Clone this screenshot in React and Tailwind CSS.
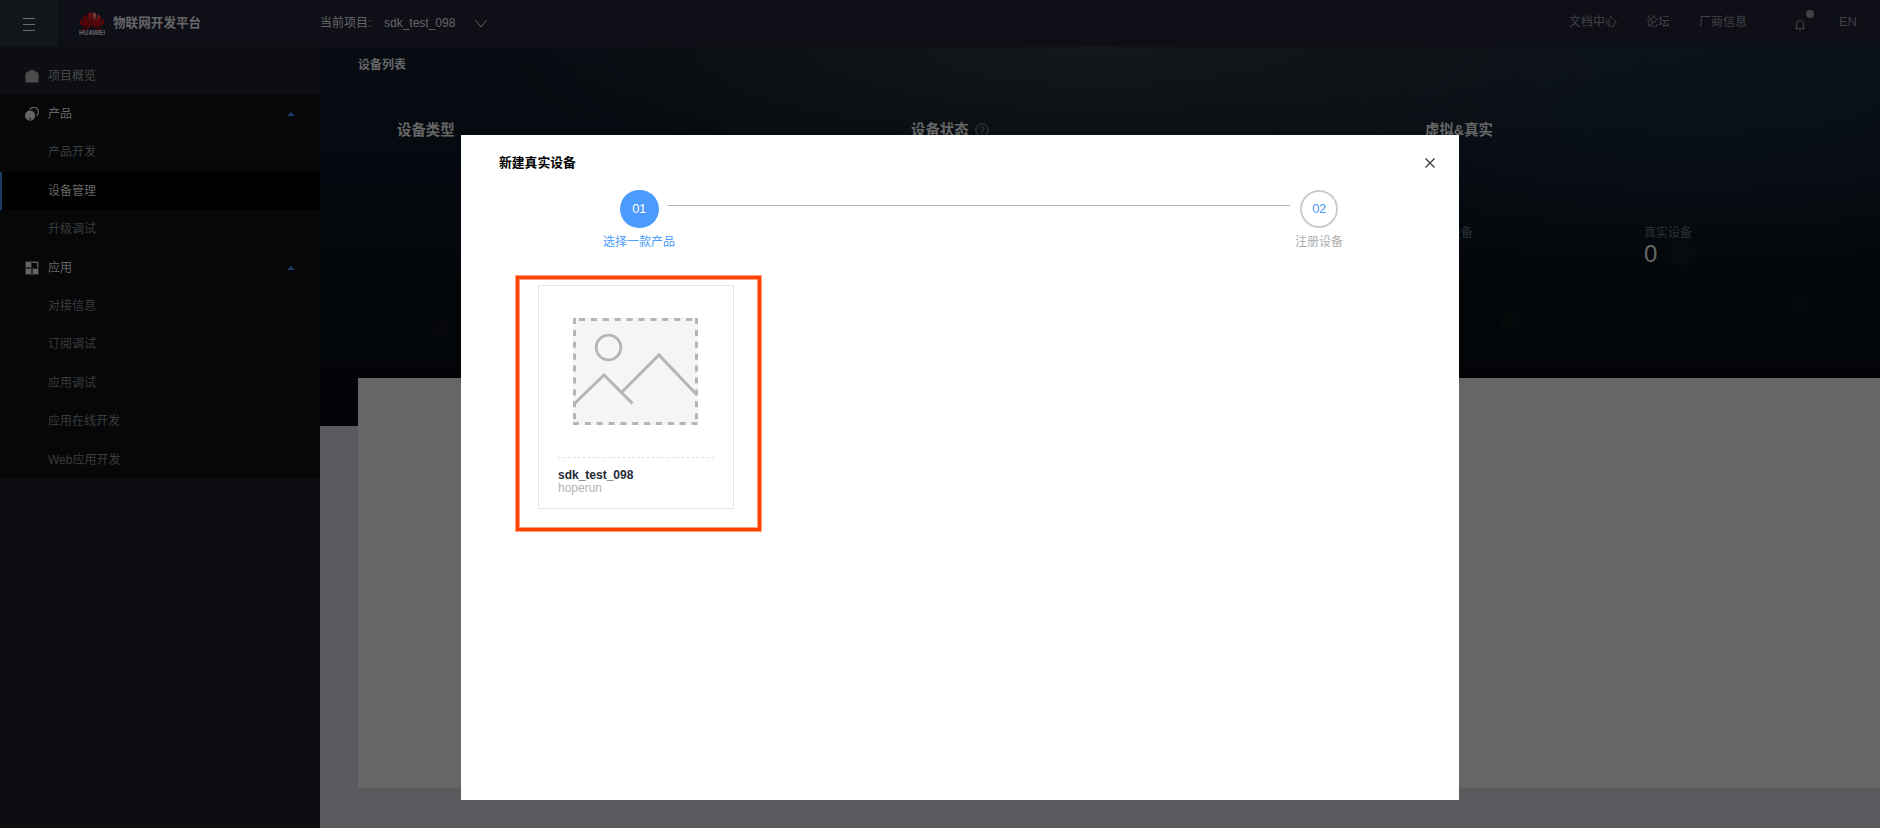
const rows = [
  { t: '产品', icon: 'product', head: true },
  { t: '产品开发' },
  { t: '设备管理', active: true },
  { t: '升级调试' },
  { t: '应用', icon: 'app', head: true },
  { t: '对接信息' },
  { t: '订阅调试' },
  { t: '应用调试' },
  { t: '应用在线开发' },
  { t: 'Web应用开发', last: true },
];

function Icon({ name }) {
  if (name === 'home')
    return (
      <svg width="14" height="14" viewBox="0 0 14 14"><path d="M7 0.5 L13.5 4 V13.5 H0.5 V4 Z" fill="#4a4b4d" /></svg>
    );
  if (name === 'product')
    return (
      <svg width="14" height="14" viewBox="0 0 14 14">
        <path d="M4.6 2.8 A4.7 4.7 0 1 1 11.5 8.8" fill="none" stroke="#5b5c5c" strokeWidth="1.3" />
        <circle cx="5.1" cy="8.6" r="5.1" fill="#646565" />
        <circle cx="5.3" cy="11.8" r="0.9" fill="#060708" />
      </svg>
    );
  return (
    <svg width="14" height="14" viewBox="0 0 14 14">
      <rect width="14" height="14" fill="#2a2b2c" />
      <rect x="1" y="1" width="5" height="5" fill="#646565" />
      <rect x="1" y="8" width="5" height="5" fill="#646565" />
      <rect x="8" y="8" width="5" height="5" fill="#646565" />
      <rect x="7" y="2" width="5" height="5" fill="#060708" />
      <path d="M7.5 1.5 H12.5 V6" fill="none" stroke="#646565" />
    </svg>
  );
}

function Petals() {
  return (
    <svg width="26" height="18" viewBox="0 0 26 18" className="mx-auto block">
      <defs>
        <radialGradient id="petal" gradientUnits="userSpaceOnUse" cx="16" cy="3" r="10">
          <stop offset="0" stopColor="#7d4740" />
          <stop offset="0.55" stopColor="#62090d" />
          <stop offset="1" stopColor="#560308" />
        </radialGradient>
      </defs>
      <g fill="url(#petal)">
        <path d="M12.7 15.2 C9.5 10 8 4 9.4 1.2 Q11.3 -0.2 12.5 0.9 Z" />
        <path d="M13.3 15.2 C16.5 10 18 4 16.6 1.2 Q14.7 -0.2 13.5 0.9 Z" />
        <path d="M12 15.6 C6.5 12.5 3.2 7.6 4.2 4.4 Q5.4 2.6 7.2 2.3 C8 7 10.5 11.5 12 15.6 Z" />
        <path d="M14 15.6 C19.5 12.5 22.8 7.6 21.8 4.4 Q20.6 2.6 18.8 2.3 C18 7 15.5 11.5 14 15.6 Z" />
        <path d="M11.3 16 C5 15.4 0.6 12.6 0.8 9.4 Q1 7.8 2 6.6 C4.5 10.8 8 12.8 11.3 16 Z" />
        <path d="M14.7 16 C21 15.4 25.4 12.6 25.2 9.4 Q25 7.8 24 6.6 C21.5 10.8 18 12.8 14.7 16 Z" />
        <path d="M11 16.7 H2.6 Q4.2 18.6 6.6 17.9 Z" />
        <path d="M15 16.7 H23.4 Q21.8 18.6 19.4 17.9 Z" />
      </g>
    </svg>
  );
}

function Sidebar() {
  return (
    <nav className="flex w-80 shrink-0 flex-col bg-[#0d0e11] pt-[9.6px] text-[12px]">
      <div className="flex h-[38.4px] items-center pl-[25px] text-[#454648]">
        <Icon name="home" />
        <span className="pl-[9px]">项目概览</span>
      </div>
      <div className="bg-[#060708]">
        {rows.map((r) =>
          r.head ? (
            <div key={r.t} className="flex h-[38.4px] items-center pr-[25px] pl-[25px] text-[#666]">
              <Icon name={r.icon} />
              <span className="flex-1 pl-[9px]">{r.t}</span>
              <svg width="8" height="4" viewBox="0 0 8 4"><path d="M0 4 L4 0 L8 4Z" fill="#1d3c64" /></svg>
            </div>
          ) : (
            <div
              key={r.t}
              className={
                r.active
                  ? 'flex h-[38.4px] items-center border-l-2 border-[#1d3c64] bg-black pl-[46px] text-[#666]'
                  : r.last
                    ? 'flex h-[38.4px] items-center pl-12 text-[#3c3d3e]'
                    : 'flex h-[38.4px] items-center pb-[0.8px] pl-12 text-[#3c3d3e]'
              }
            >
              {r.t}
            </div>
          )
        )}
      </div>
    </nav>
  );
}

function Header() {
  return (
    <header className="flex h-[47px] shrink-0 items-center bg-[#0f0f17] text-[12px] text-[#666669]">
      <div className="flex h-full w-[58px] items-center justify-center bg-[#111619] pt-[2px]">
        <svg width="12" height="13" viewBox="0 0 12 13" stroke="#6b6d6e"><path d="M0 .5H12M0 6.5H12M0 12.5H12" /></svg>
      </div>
      <div className="ml-[21px] w-[26px]">
        <Petals />
        <div className="flex justify-center text-[6.5px] leading-[6px] font-bold">
          <span>HUAWEI</span>
        </div>
      </div>
      <div className="ml-2 w-[207px] text-[12.6px] font-bold">物联网开发平台</div>
      <div className="w-16 pb-[2px]">当前项目:</div>
      <div className="pb-[2px]">sdk_test_098</div>
      <svg className="mt-[1px] ml-5" width="12" height="8" viewBox="0 0 12 8" fill="none" stroke="#666669"><path d="M.5 .5 L6 7 L11.5 .5" /></svg>
      <div className="ml-auto flex items-center pb-[2px] text-[#414147]">
        <span className="mr-[29px] pb-px">文档中心</span>
        <span className="mr-[29px] pb-px">论坛</span>
        <span className="mr-[47px] pb-px">厂商信息</span>
        <div className="relative mr-[33px] pt-1">
          <svg width="12" height="12" viewBox="0 0 12 12" fill="none" stroke="#414147"><path d="M1 9.5 H11 M2.5 9.5 V5 A3.5 3.5 0 0 1 9.5 5 V9.5 M5 11.2 H7" /></svg>
          <i className="absolute -top-[5px] left-[12px] size-[8px] rounded-full bg-[#414147]" />
        </div>
        <span className="mr-[23px] pb-px text-[13px]">EN</span>
      </div>
    </header>
  );
}

function Hero() {
  return (
    <section className="flex h-[379px] flex-col bg-[radial-gradient(circle_at_1362px_207px,#0a0e10_0,transparent_16px),radial-gradient(circle_at_1189px_273px,#090b0c_0,transparent_14px),radial-gradient(circle_at_1479px_257px,#090b0e_0,transparent_14px),radial-gradient(circle_at_122px_283px,#08090c_0,transparent_14px),radial-gradient(ellipse_620px_140px_at_50%_0,#13181a,transparent),radial-gradient(ellipse_500px_220px_at_88%_0,#0a131a,transparent),linear-gradient(to_bottom,#070b12,#060a10_35%,#03070a_60%,#020306)] pl-[38px] text-[#666]">
      <h1 className="pt-[9px] text-[12px] leading-[18px] font-bold">设备列表</h1>
      <div className="mt-[46px] flex pl-[39px] text-[14.4px] leading-5 font-bold">
        <div className="w-[514px]">设备类型</div>
        <div className="flex w-[514px] items-center gap-[6px]">
          设备状态
          <svg width="14" height="14" viewBox="0 0 14 14" fill="none" stroke="#3c4044"><circle cx="7" cy="7" r="6.2" /><path d="M5 5.5 A2 2 0 1 1 7 7.5 V9 M7 10 V11" /></svg>
        </div>
        <div>虚拟&amp;真实</div>
      </div>
      <div className="mt-[84px] flex pl-[1067px] text-[12px] leading-[18px] text-[#2d3135]">
        <div className="w-[219px]">虚拟设备</div>
        <div>
          真实设备
          <div className="text-[24px] leading-[24px] text-[#666]">0</div>
        </div>
      </div>
    </section>
  );
}

function Placeholder() {
  return (
    <svg width="125" height="107" viewBox="0 0 125 107" fill="none" stroke="#b5b5b5">
      <rect width="125" height="107" fill="#f5f5f5" stroke="none" />
      <path d="M6 1.5 H125" strokeWidth="3" strokeDasharray="6 5.9" />
      <path d="M0 105.5 H125" strokeWidth="3" strokeDasharray="6 5.85" />
      <path d="M1.5 0 V107" strokeWidth="3" strokeDasharray="6 5.9" />
      <path d="M123.5 0 V107" strokeWidth="3" strokeDasharray="6 5.9" />
      <circle cx="35.5" cy="29.5" r="12.3" strokeWidth="2.8" />
      <path d="M1 86 L31 57 L59.5 85.5 M49 74 L86 37 L123 76" strokeWidth="3" />
    </svg>
  );
}

function Modal() {
  return (
    <div className="absolute top-[135px] left-[461px] h-[665px] w-[998px] bg-white">
      <div className="flex items-center justify-between pt-[18px] pr-[24px] pl-[38px]">
        <h2 className="text-[12.8px] leading-5 font-bold text-black">新建真实设备</h2>
        <svg width="10" height="10" viewBox="0 0 10 10" stroke="#333" strokeWidth="1.2"><path d="M.5 .5 L9.5 9.5 M9.5 .5 L.5 9.5" /></svg>
      </div>
      <div className="mt-[17px] flex pl-[138px] text-[12px]">
        <div className="flex w-20 flex-col items-center text-[#4a9bfc]">
          <div className="flex h-[38px] w-[39px] items-center justify-center rounded-full bg-[#4a9bfc] pb-px text-[13px] tracking-[-0.4px] text-white">01</div>
          <div className="mt-[5px] leading-[18px] whitespace-nowrap">选择一款产品</div>
        </div>
        <div className="mt-[15px] -ml-[11px] h-px w-[622px] bg-[#b3b3b3]" />
        <div className="flex w-[58px] flex-col items-center text-[#adadad]">
          <div className="flex size-[38px] items-center justify-center rounded-full border-2 border-[#ccc] pb-px text-[13px] tracking-[-0.4px] text-[#4a9bfc]">02</div>
          <div className="mt-[5px] leading-[18px] whitespace-nowrap">注册设备</div>
        </div>
      </div>
      <div className="mt-[25px] ml-[55px] h-[255px] w-[245px] border-3 border-[#ff4200] pt-[6px] pl-[19px] shadow-[0_0_0_1px_#ff420080,inset_0_0_0_1px_#ff420080]">
        <div className="h-[224px] w-[196px] border border-[#e6e6e6] px-[19px]">
          <div className="flex h-[172px] border-b border-dashed border-[#e0e0e0] pt-8 pl-[15px]">
            <Placeholder />
          </div>
          <div className="pt-[10px] text-[12px] leading-[14px] font-bold text-[#252b3a]">sdk_test_098</div>
          <div className="text-[12px] leading-[13px] text-[#b3b3b3]">hoperun</div>
        </div>
      </div>
    </div>
  );
}

export default function App() {
  return (
    <div className="relative flex h-[828px] w-[1880px] flex-col overflow-hidden bg-[#5a5b5f] font-['Liberation_Sans','Noto_Sans_CJK_SC',sans-serif]">
      <Header />
      <div className="flex flex-1">
        <Sidebar />
        <main className="flex-1">
          <Hero />
          <div className="relative -mt-12 ml-[38px] h-[410px] bg-[#666]" />
        </main>
      </div>
      <Modal />
    </div>
  );
}
